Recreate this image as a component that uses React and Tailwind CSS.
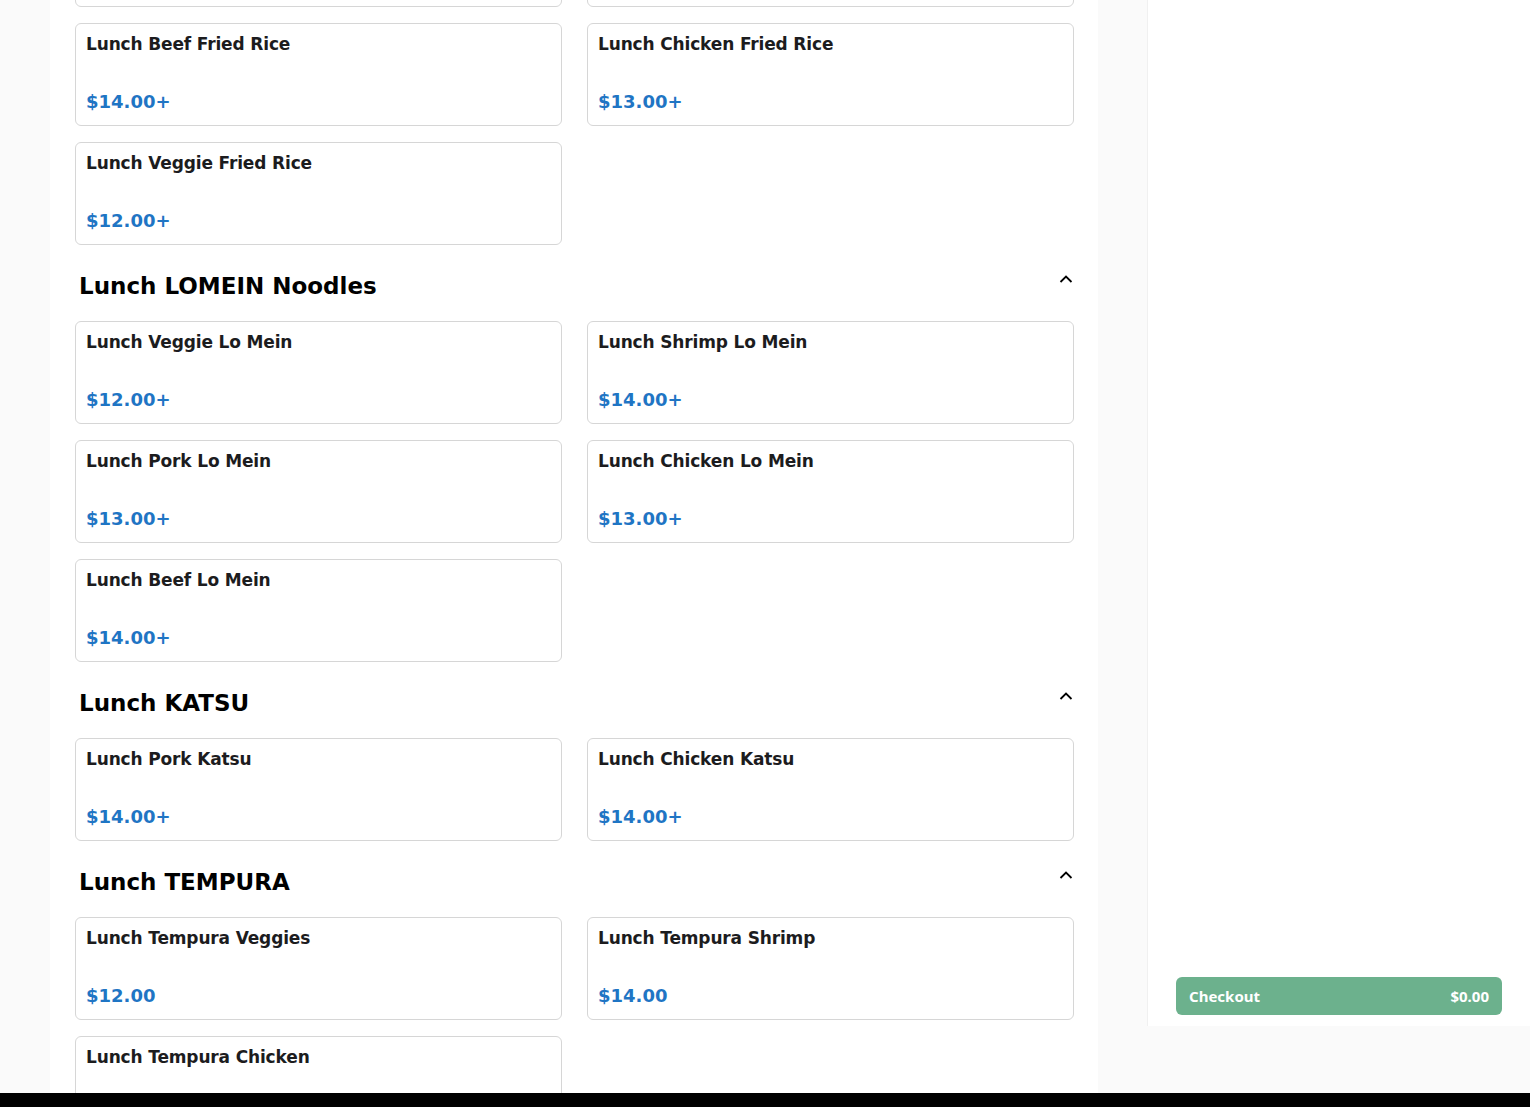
import React from "react";

const sections = [
  {
    title: null,
    items: [
      { name: "Lunch Shrimp Fried Rice", price: "$14.00+" },
      { name: "Lunch Pork Fried Rice", price: "$13.00+" },
      { name: "Lunch Beef Fried Rice", price: "$14.00+" },
      { name: "Lunch Chicken Fried Rice", price: "$13.00+" },
      { name: "Lunch Veggie Fried Rice", price: "$12.00+" },
    ],
  },
  {
    title: "Lunch LOMEIN Noodles",
    items: [
      { name: "Lunch Veggie Lo Mein", price: "$12.00+" },
      { name: "Lunch Shrimp Lo Mein", price: "$14.00+" },
      { name: "Lunch Pork Lo Mein", price: "$13.00+" },
      { name: "Lunch Chicken Lo Mein", price: "$13.00+" },
      { name: "Lunch Beef Lo Mein", price: "$14.00+" },
    ],
  },
  {
    title: "Lunch KATSU",
    items: [
      { name: "Lunch Pork Katsu", price: "$14.00+" },
      { name: "Lunch Chicken Katsu", price: "$14.00+" },
    ],
  },
  {
    title: "Lunch TEMPURA",
    items: [
      { name: "Lunch Tempura Veggies", price: "$12.00" },
      { name: "Lunch Tempura Shrimp", price: "$14.00" },
      { name: "Lunch Tempura Chicken", price: "$13.00" },
    ],
  },
];

function Chevron() {
  return (
    <svg width="16" height="12" viewBox="0 0 16 12" className="mt-[-14px]">
      <polyline points="2.5,9 8,3.5 13.5,9" fill="none" stroke="#000" strokeWidth="1.8" />
    </svg>
  );
}

function ItemCard({ item }) {
  return (
    <div className="h-[103px] flex flex-col justify-between border border-[#d6d6d6] rounded-[6px] bg-white pt-[10px] pb-[13px] pl-[10px] pr-[10px]">
      <div className="text-[17px] leading-[21px] tracking-[-0.15px] font-bold text-[#1c1c1e]">{item.name}</div>
      <div className="text-[18px] leading-[21px] font-bold text-[#1f75c4]">{item.price}</div>
    </div>
  );
}

export default function App() {
  return (
    <div className="bg-[#fafafa] h-[1107px] overflow-hidden relative" style={{ fontFamily: '"DejaVu Sans", sans-serif' }}>
      <div className="flex h-[1093px] overflow-hidden">
        <div className="ml-[50px] w-[1048px] bg-white pl-[25px] pr-[24px] shrink-0">
          <div className="mt-[-96px]">
            {sections.map((s, i) => (
              <div key={i}>
                {s.title && (
                  <div className="flex items-center justify-between pl-[4px] pr-0 pt-[26px] h-[76px] pb-[21px]">
                    <h2 className="text-[23px] leading-[28px] font-bold text-black">{s.title}</h2>
                    <Chevron />
                  </div>
                )}
                <div className="grid grid-cols-2 gap-x-[25px] gap-y-[16px]">
                  {s.items.map((it) => (
                    <ItemCard key={it.name} item={it} />
                  ))}
                </div>
              </div>
            ))}
          </div>
        </div>
        <div className="ml-[49px] w-[383px] h-[1026px] bg-white border-l border-[#f0f0f0] flex flex-col justify-end px-[28px] pb-[11px]">
          <button
            className="h-[38px] rounded-[6px] bg-[#6cb18d] flex items-center justify-between px-[13px] text-white text-[15px] font-bold"
            style={{ fontFamily: '"Noto Sans", sans-serif' }}
          >
            <span>Checkout</span>
            <span>$0.00</span>
          </button>
        </div>
      </div>
      <div className="h-[14px] bg-black" />
    </div>
  );
}
